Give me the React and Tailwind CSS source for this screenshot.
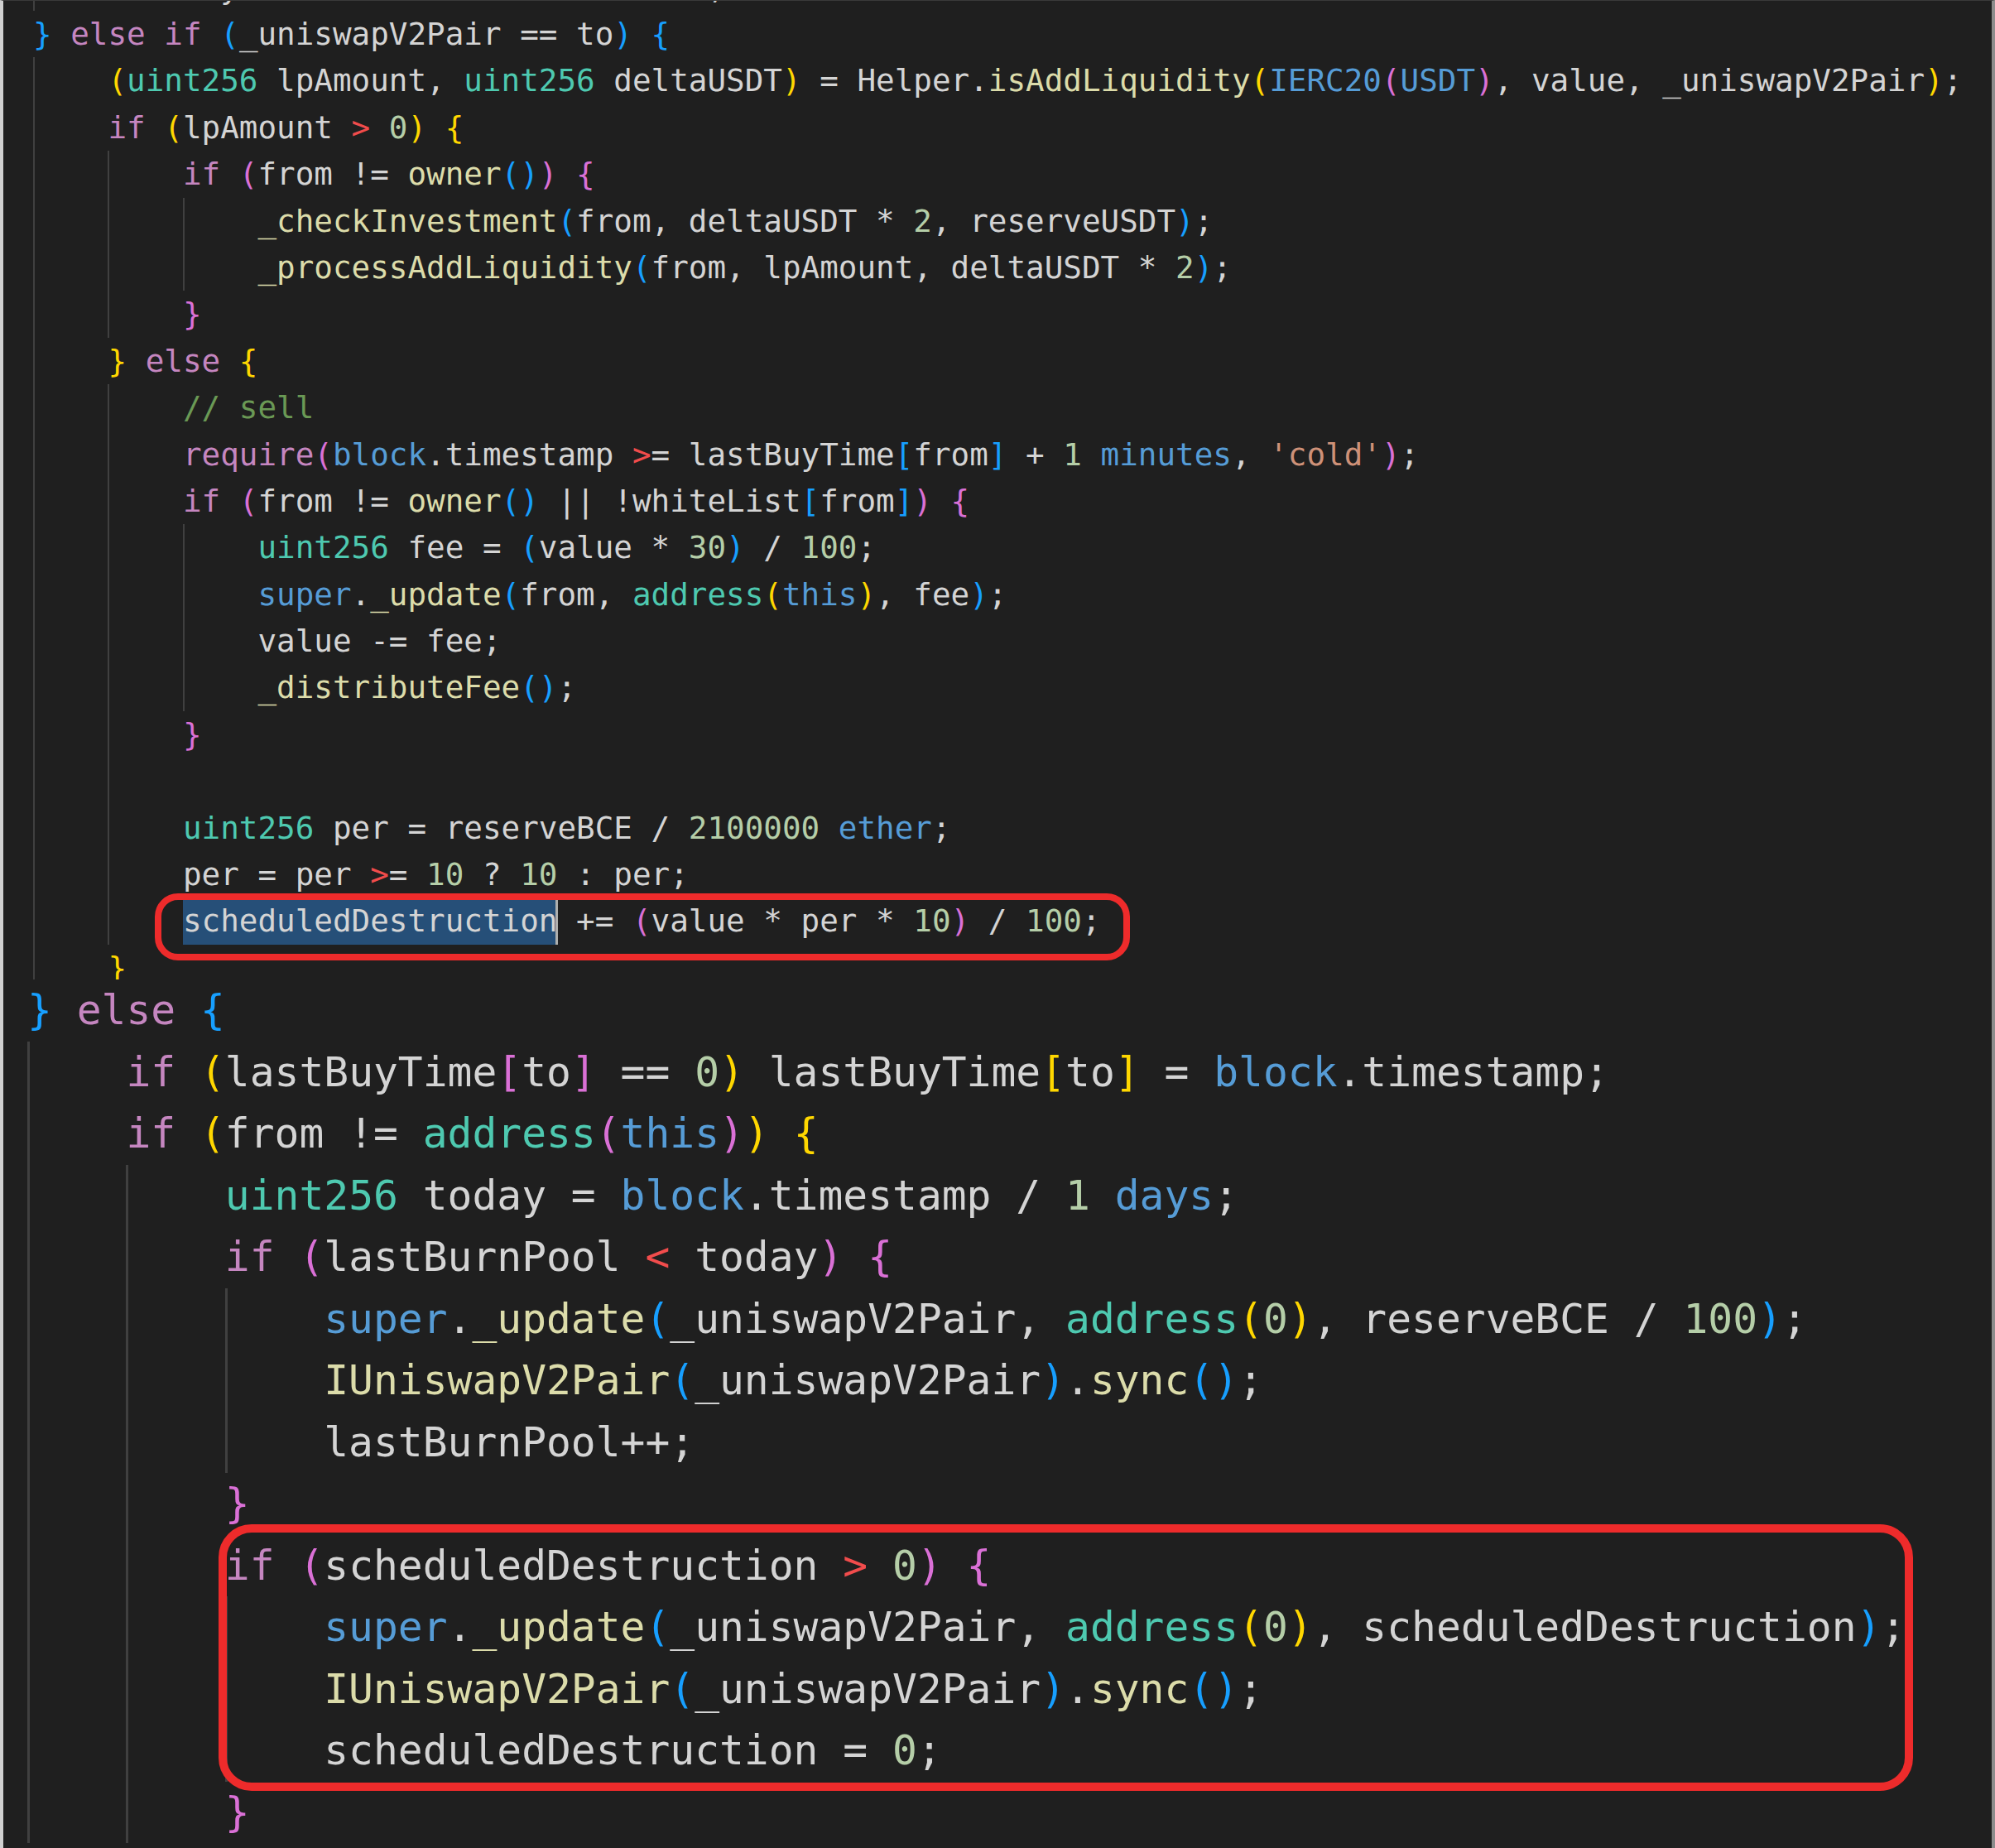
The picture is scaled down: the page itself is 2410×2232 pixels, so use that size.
const COLORS = {
  w: 'text-[#d4d4d4]',
  k: 'text-[#c586c0]',
  t: 'text-[#4ec9b0]',
  f: 'text-[#dcdcaa]',
  b: 'text-[#569cd6]',
  n: 'text-[#b5cea8]',
  c: 'text-[#6a9955]',
  s: 'text-[#ce9178]',
  r: 'text-[#f14c4c]',
  g: 'text-[#ffd700]',
  p: 'text-[#da70d6]',
  u: 'text-[#179fff]',
  S: 'inline-block bg-[#264f78] text-[#d4d4d4]',
};

// § + colour key, then the text of that token
const TOP = [
  [1, '§w      y                         ,'],
  [0, '§u}§w §kelse if §u(§w_uniswapV2Pair == to§u)§w §u{'],
  [1, '§g(§tuint256§w lpAmount, §tuint256§w deltaUSDT§g)§w = Helper.§fisAddLiquidity§g(§bIERC20§p(§bUSDT§p)§w, value, _uniswapV2Pair§g)§w;'],
  [1, '§kif§w §g(§wlpAmount §r>§w §n0§g)§w §g{'],
  [2, '§kif§w §p(§wfrom != §fowner§u()§p)§w §p{'],
  [3, '§f_checkInvestment§u(§wfrom, deltaUSDT * §n2§w, reserveUSDT§u)§w;'],
  [3, '§f_processAddLiquidity§u(§wfrom, lpAmount, deltaUSDT * §n2§u)§w;'],
  [2, '§p}'],
  [1, '§g}§w §kelse§w §g{'],
  [2, '§c// sell'],
  [2, "§krequire§p(§bblock§w.timestamp §r>§w= lastBuyTime§u[§wfrom§u]§w + §n1§w §bminutes§w, §s'cold'§p)§w;"],
  [2, '§kif§w §p(§wfrom != §fowner§u()§w || !whiteList§u[§wfrom§u]§p)§w §p{'],
  [3, '§tuint256§w fee = §u(§wvalue * §n30§u)§w / §n100§w;'],
  [3, '§bsuper§w.§f_update§u(§wfrom, §taddress§g(§bthis§g)§w, fee§u)§w;'],
  [3, '§wvalue -= fee;'],
  [3, '§f_distributeFee§u()§w;'],
  [2, '§p}'],
  [2, ''],
  [2, '§tuint256§w per = reserveBCE / §n2100000§w §bether§w;'],
  [2, '§wper = per §r>§w= §n10§w ? §n10§w : per;'],
  [2, '§SscheduledDestruction§K§w += §p(§wvalue * per * §n10§p)§w / §n100§w;'],
  [1, '§g}'],
];

const BOTTOM = [
  [0, '§u}§w §kelse§w §u{'],
  [1, '§kif§w §g(§wlastBuyTime§p[§wto§p]§w == §n0§g)§w lastBuyTime§g[§wto§g]§w = §bblock§w.timestamp;'],
  [1, '§kif§w §g(§wfrom != §taddress§p(§bthis§p)§g)§w §g{'],
  [2, '§tuint256§w today = §bblock§w.timestamp / §n1§w §bdays§w;'],
  [2, '§kif§w §p(§wlastBurnPool §r<§w today§p)§w §p{'],
  [3, '§bsuper§w.§f_update§u(§w_uniswapV2Pair, §taddress§g(§n0§g)§w, reserveBCE / §n100§u)§w;'],
  [3, '§fIUniswapV2Pair§u(§w_uniswapV2Pair§u)§w.§fsync§u()§w;'],
  [3, '§wlastBurnPool++;'],
  [2, '§p}'],
  [2, '§kif§w §p(§wscheduledDestruction §r>§w §n0§p)§w §p{'],
  [3, '§bsuper§w.§f_update§u(§w_uniswapV2Pair, §taddress§g(§n0§g)§w, scheduledDestruction§u)§w;'],
  [3, '§fIUniswapV2Pair§u(§w_uniswapV2Pair§u)§w.§fsync§u()§w;'],
  [3, '§wscheduledDestruction = §n0§w;'],
  [2, '§p}'],
];

const parse = (src) =>
  src
    .split('§')
    .filter(Boolean)
    .map((seg) => ({ key: seg[0], text: seg.slice(1) }));

function CodeLine({ indent, src, size }) {
  const guides = Array.from({ length: indent });
  return (
    <div className={`flex whitespace-pre ${size.line}`}>
      {guides.map((_, i) => (
        <span key={i} className={`w-[4ch] shrink-0 ${size.guide}`} />
      ))}
      <span className="text-[#d4d4d4]">
        {parse(src).map((tok, i) =>
          tok.key === 'K' ? (
            <span key={i} className={`inline-block w-[3px] -ml-[2px] -mr-[1px] align-top bg-[#aeafad] ${size.cursor}`} />
          ) : (
            <span key={i} className={COLORS[tok.key]}>
              {tok.text}
            </span>
          )
        )}
        {tok_rest(src)}
      </span>
    </div>
  );
}

function tok_rest(src) {
  // rest of a "K" token (text written right after the cursor key)
  const seg = src.split('§').find((s) => s[0] === 'K');
  return seg && seg.length > 1 ? <span className="text-[#d4d4d4]">{seg.slice(1)}</span> : null;
}

const TOP_SIZE = {
  line: 'h-[56.4px] text-[37.6px] leading-[56.4px]',
  guide: 'border-l-2 border-[#404040]',
  cursor: 'h-[56.4px]',
};

const BOTTOM_SIZE = {
  line: 'h-[74.5px] text-[49.6px] leading-[74.5px]',
  guide: 'border-l-[3px] border-[#404040]',
  cursor: 'h-[74.5px]',
};

export default function App() {
  return (
    <div className="relative flex h-[2232px] w-[2410px] flex-col overflow-hidden border-t border-l-4 border-r-4 border-t-[#3a3a3a] border-l-[#d0d0d0] border-r-[#8c8c8c] bg-[#1f1f1f] font-['DejaVu_Sans_Mono',monospace]">
      <div className="h-[1182px] shrink-0 overflow-hidden pl-[36px]">
        <div className="-mt-[44.4px]">
          {TOP.map(([indent, src], i) => (
            <CodeLine key={i} indent={indent} src={src} size={TOP_SIZE} />
          ))}
        </div>
      </div>

      <div className="flex-1 overflow-hidden pl-[29px]">
        {BOTTOM.map(([indent, src], i) => (
          <CodeLine key={i} indent={indent} src={src} size={BOTTOM_SIZE} />
        ))}
      </div>

      <div className="pointer-events-none absolute left-[183px] top-[1078px] h-[81px] w-[1178px] rounded-[28px] border-[8px] border-[#ee2b2b]" />
      <div className="pointer-events-none absolute left-[260px] top-[1840px] h-[322px] w-[2047px] rounded-[40px] border-[10px] border-[#ee2b2b]" />
    </div>
  );
}
